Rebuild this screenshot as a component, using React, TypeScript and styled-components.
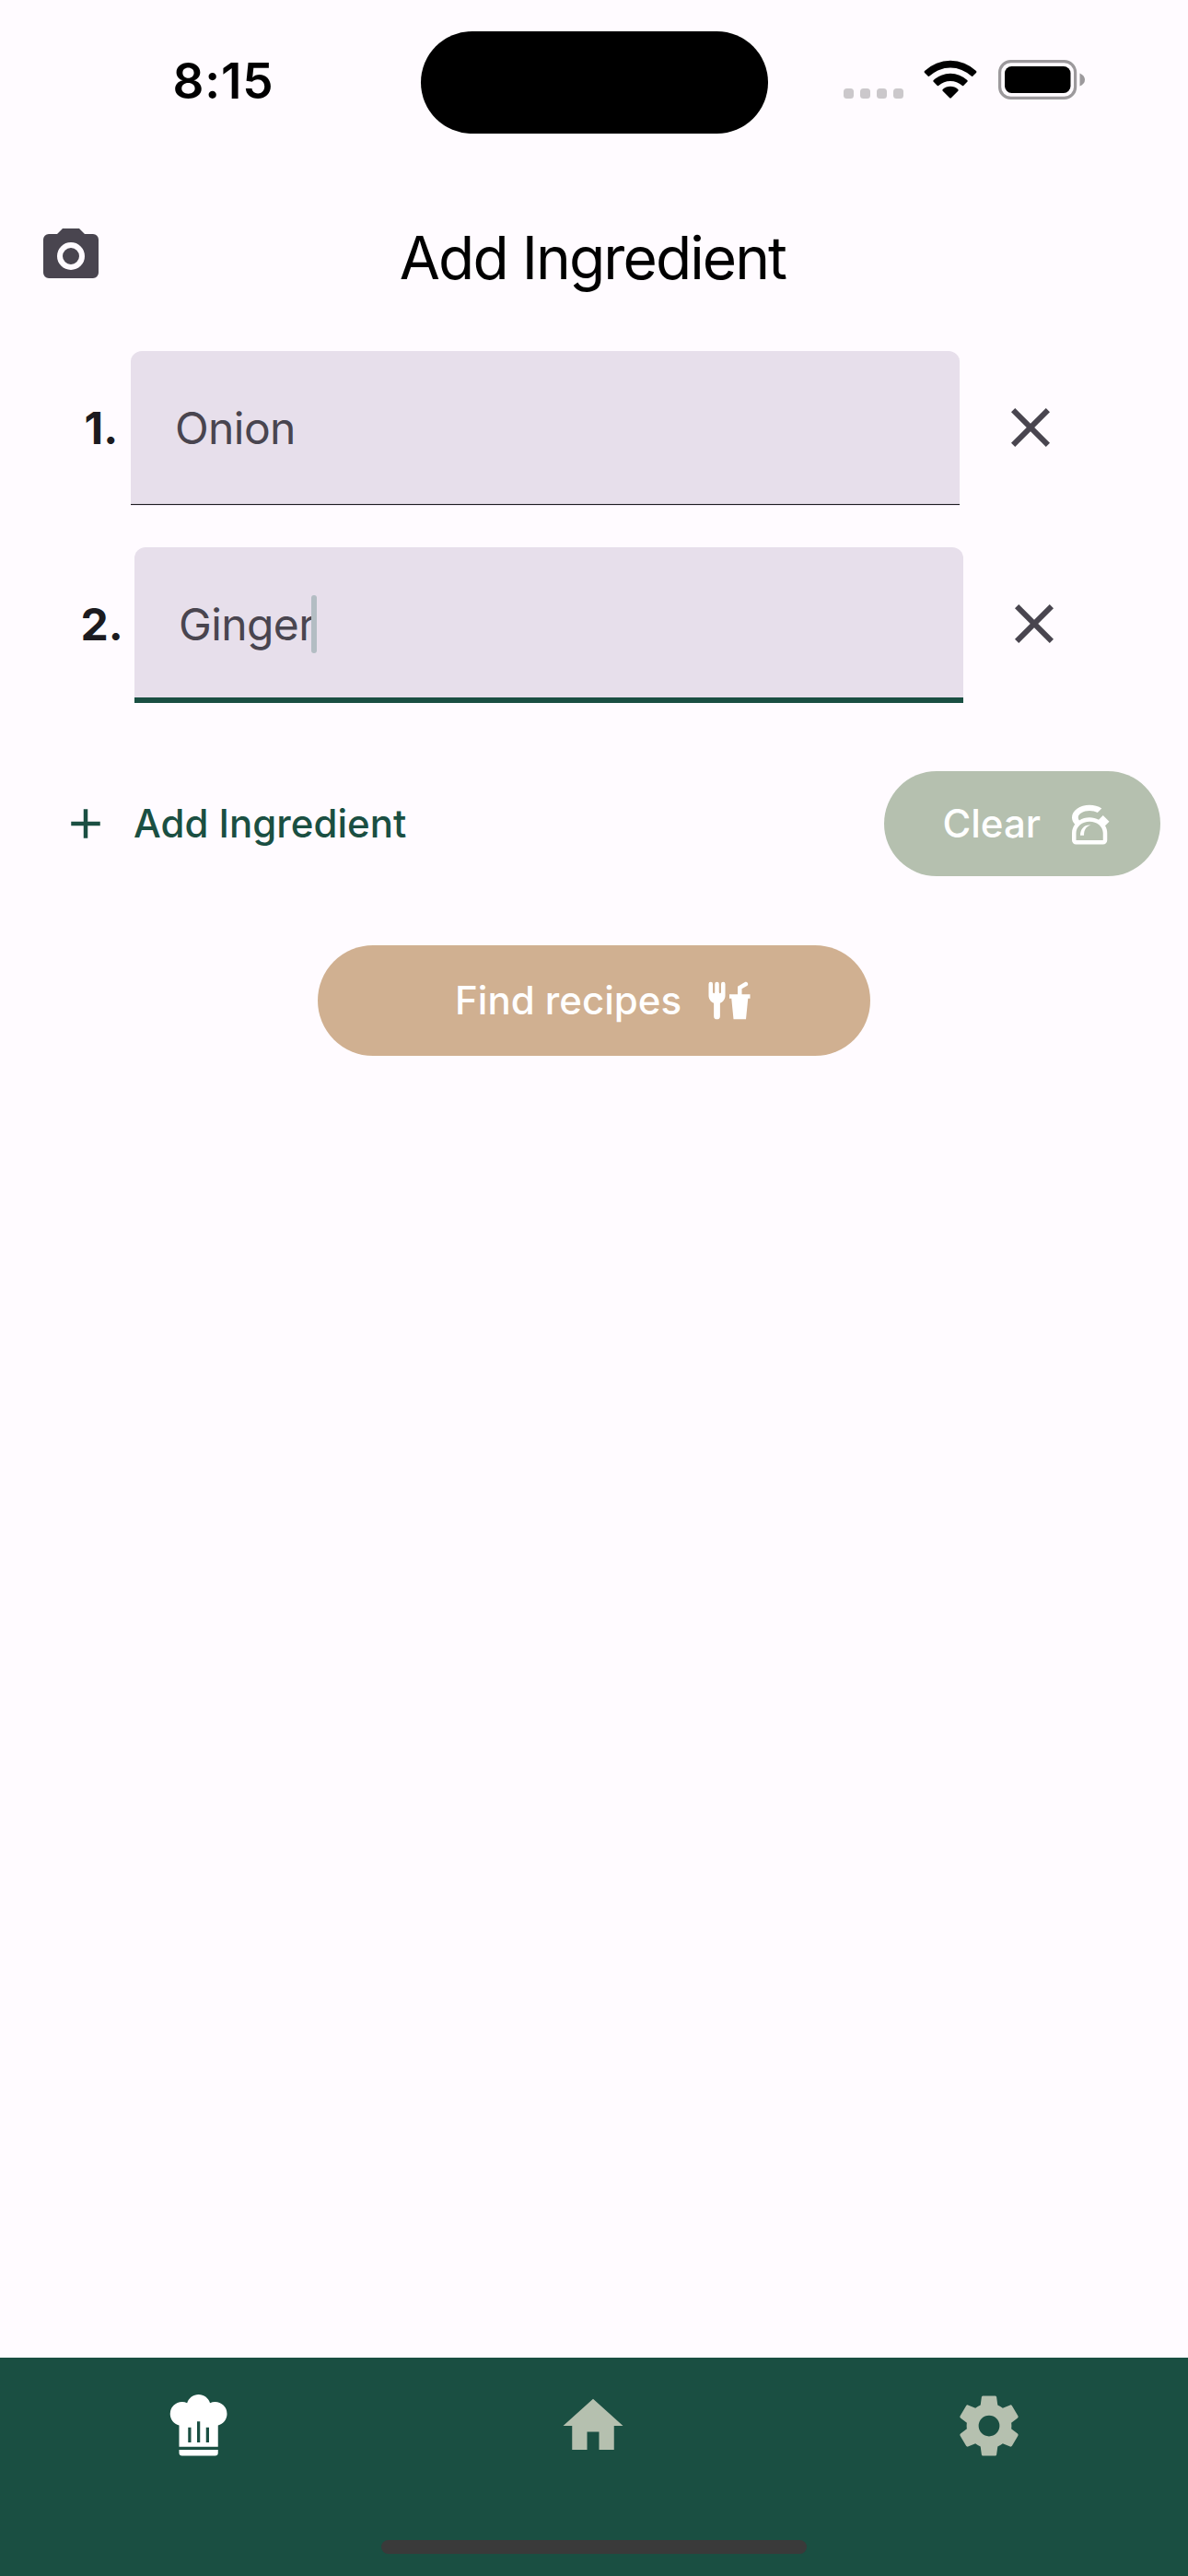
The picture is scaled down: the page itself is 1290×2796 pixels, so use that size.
import React from "react";
import styled, { createGlobalStyle } from "styled-components";

const color = {
  surface: "#fffbff",
  field: "#e7dfeb",
  ink: "#1c1b1f",
  muted: "#49454f",
  green: "#1a4f42",
  sage: "#b5c0af",
  sand: "#d0b091",
};

const GlobalStyle = createGlobalStyle`
  *, *::before, *::after { box-sizing: border-box; }
  body {
    margin: 0;
    background: ${color.surface};
    font-family: Inter, "Liberation Sans", sans-serif;
    -webkit-font-smoothing: antialiased;
  }
  button { font-family: inherit; border: 0; padding: 0; margin: 0; background: none; }
`;

const Screen = styled.div`
  width: 1290px;
  height: 2796px;
  display: flex;
  flex-direction: column;
  background: ${color.surface};
  overflow: hidden;
`;

const StatusBar = styled.div`
  height: 177px;
  display: grid;
  grid-template-columns: 456.5px 377px 456.5px;
  flex: none;
`;

const Clock = styled.div`
  padding: 57px 0 0 187.5px;
  font-size: 53px;
  line-height: 63px;
  font-weight: 600;
  letter-spacing: 0.8px;
  color: #000;
`;

const Island = styled.div`
  height: 111px;
  margin-top: 33.5px;
  border-radius: 56px;
  background: #000;
`;

const StatusIcons = styled.div`
  display: flex;
  padding: 65px 0 0 82.5px;
  align-items: flex-start;
`;

const Dots = styled.div`
  display: flex;
  gap: 7px;
  margin-top: 31px;
`;

const Dot = styled.span`
  width: 11px;
  height: 11px;
  border-radius: 3.5px;
  background: #cbc8cb;
`;

const Wifi = styled.svg`
  width: 58px;
  height: 42px;
  margin-left: 22px;
`;

const Battery = styled.svg`
  width: 95px;
  height: 43px;
  margin-left: 23px;
`;

const Header = styled.header`
  height: 204px;
  flex: none;
  display: grid;
  grid-template-columns: 154px 1fr 154px;
  align-items: start;
`;

const CameraButton = styled.button`
  display: flex;
  justify-content: center;
  padding-top: 65px;
  color: ${color.muted};
`;

const Title = styled.h1`
  margin: 0;
  padding: 64px 3px 0 0;
  text-align: center;
  font-size: 64px;
  line-height: 78px;
  font-weight: 400;
  letter-spacing: -1.9px;
  color: #000;
`;

const Glyph = styled.svg<{ $size: number }>`
  display: block;
  flex: none;
  width: ${(p) => p.$size}px;
  height: ${(p) => p.$size}px;
  fill: currentColor;
`;

const IngredientList = styled.ul`
  list-style: none;
  margin: 0;
  padding: 0;
  display: flex;
  flex-direction: column;
  gap: 45px;
`;

const IngredientRow = styled.li`
  height: 168px;
  display: flex;
  justify-content: center;
  align-items: center;
`;

const Ordinal = styled.span<{ $width: number }>`
  width: ${(p) => p.$width}px;
  padding-left: 1.5px;
  font-size: 48px;
  line-height: 60px;
  font-weight: 700;
  color: ${color.ink};
`;

const Field = styled.div<{ $focused: boolean }>`
  width: 900px;
  height: ${(p) => (p.$focused ? 169 : 168)}px;
  margin-bottom: ${(p) => (p.$focused ? -1 : 0)}px;
  display: flex;
  align-items: center;
  padding: 0 0 ${(p) => (p.$focused ? 2 : 0)}px 48px;
  border-radius: 12px 12px 0 0;
  color: ${color.muted};
  background: ${color.field};
  box-shadow: ${(p) => (p.$focused ? `inset 0 -6px ${color.green}` : `inset 0 -1px ${color.field}, inset 0 -2px ${color.ink}`)};
`;

const FieldText = styled.span`
  font-size: 48px;
  line-height: 60px;
  letter-spacing: -0.6px;
`;

const Caret = styled.span`
  width: 6px;
  height: 63px;
  margin-left: -4px;
  border-radius: 3px;
  background: #b3bdc3;
`;

const RemoveButton = styled.button`
  width: 120px;
  height: 120px;
  margin: 0 21px 2px 17px;
  display: flex;
  align-items: center;
  justify-content: center;
  color: ${color.muted};
`;

const Actions = styled.div`
  display: flex;
  justify-content: space-between;
  align-items: center;
  height: 114px;
  margin-top: 75px;
  padding: 0 30px 0 66px;
`;

const TextButton = styled.button`
  display: flex;
  align-items: center;
  gap: 25px;
  color: ${color.green};
`;

const Label = styled.span`
  font-size: 42px;
  line-height: 60px;
  font-weight: 500;
  white-space: nowrap;
`;

const PillButton = styled.button<{ $width: number; $height: number; $tone: string; $inset: number }>`
  width: ${(p) => p.$width}px;
  height: ${(p) => p.$height}px;
  padding-right: ${(p) => p.$inset}px;
  display: flex;
  align-items: center;
  justify-content: flex-end;
  gap: 25px;
  border-radius: 60px;
  background: ${(p) => p.$tone};
  color: #fff;
`;

const FindRow = styled.div`
  display: flex;
  justify-content: center;
  margin-top: 75px;
`;

const TabBar = styled.nav`
  height: 237px;
  flex: none;
  margin-top: auto;
  background: ${color.green};
  display: flex;
  flex-direction: column;
  justify-content: space-between;
  align-items: center;
  padding: 35px 0 24px;
`;

const Tabs = styled.div`
  width: 1290px;
  margin: 0 1px 0 -1px;
  display: grid;
  grid-template-columns: repeat(3, 1fr);
`;

const Tab = styled.button<{ $active?: boolean }>`
  display: flex;
  justify-content: center;
  color: ${(p) => (p.$active ? "#fff" : color.sage)};
`;

const HomeIndicator = styled.div`
  width: 462px;
  height: 15px;
  border-radius: 8px;
  background: #3a3a3a;
`;

const paths = {
  camera:
    "M4,4H7L9,2H15L17,4H20A2,2 0 0,1 22,6V18A2,2 0 0,1 20,20H4A2,2 0 0,1 2,18V6A2,2 0 0,1 4,4M12,7A5,5 0 0,0 7,12A5,5 0 0,0 12,17A5,5 0 0,0 17,12A5,5 0 0,0 12,7M12,9A3,3 0 0,1 15,12A3,3 0 0,1 12,15A3,3 0 0,1 9,12A3,3 0 0,1 12,9Z",
  close:
    "M19,6.41L17.59,5L12,10.59L6.41,5L5,6.41L10.59,12L5,17.59L6.41,19L12,13.41L17.59,19L19,17.59L13.41,12L19,6.41Z",
  plus: "M19,13H13V19H11V13H5V11H11V5H13V11H19V13Z",
  kettle:
    "M12.5,3C7.81,3 4,5.69 4,9C4,10.19 4.5,11.34 5.44,12.33C4.53,13.5 4,14.96 4,16.5V20C4,21.11 4.89,22 6,22H19C20.11,22 21,21.11 21,20V16.5C21,15.28 20.66,14.07 20,13L22,11L19,8L16.9,10.1C15.58,9.38 14.05,9 12.5,9C10.65,9 8.95,9.53 7.55,10.41C7.19,9.97 7,9.5 7,9C7,7.21 9.46,5.75 12.5,5.75C13.93,5.75 15.3,6.08 16.33,6.67L18.35,4.65C16.77,3.59 14.68,3 12.5,3M12.5,11C16.09,11 19,13.46 19,16.5V20H6V16.5C6,13.46 8.91,11 12.5,11M13.1,12.7C10.2,12.2 8,14.4 8,17.7H9.8C9.8,15.2 10.6,13.5 13.1,12.7Z",
  forkDrink:
    "M3,3A1,1 0 0,0 2,4V8L2,9.5C2,11.19 3.03,12.63 4.5,13.22V19.5A1.5,1.5 0 0,0 6,21A1.5,1.5 0 0,0 7.5,19.5V13.22C8.97,12.63 10,11.19 10,9.5V8L10,4A1,1 0 0,0 9,3A1,1 0 0,0 8,4V8A0.5,0.5 0 0,1 7.5,8.5A0.5,0.5 0 0,1 7,8V4A1,1 0 0,0 6,3A1,1 0 0,0 5,4V8A0.5,0.5 0 0,1 4.5,8.5A0.5,0.5 0 0,1 4,8V4A1,1 0 0,0 3,3M19.88,3C19.75,3 19.62,3.09 19.5,3.16L16,5.25V9H12V11H13L14,21H20L21,11H22V9H18V6.34L20.5,4.84C21,4.56 21.13,4 20.84,3.5C20.63,3.14 20.26,2.95 19.88,3Z",
  chefHat:
    "M12.5,1.5C10.73,1.5 9.17,2.67 8.67,4.37C8.14,4.13 7.58,4 7,4A4,4 0 0,0 3,8C3,9.82 4.24,11.41 6,11.87V19H19V11.87C20.76,11.41 22,9.82 22,8A4,4 0 0,0 18,4C17.42,4 16.86,4.13 16.33,4.37C15.83,2.67 14.27,1.5 12.5,1.5M12,10.5H13V17.5H12V10.5M9,12.5H10V17.5H9V12.5M15,12.5H16V17.5H15V12.5M6,20V21A1,1 0 0,0 7,22H18A1,1 0 0,0 19,21V20H6Z",
  home: "M10,20V14H14V20H19V12H22L12,3L2,12H5V20H10Z",
  cog: "M12,15.5A3.5,3.5 0 0,1 8.5,12A3.5,3.5 0 0,1 12,8.5A3.5,3.5 0 0,1 15.5,12A3.5,3.5 0 0,1 12,15.5M19.43,12.97C19.47,12.65 19.5,12.33 19.5,12C19.5,11.67 19.47,11.34 19.43,11L21.54,9.37C21.73,9.22 21.78,8.95 21.66,8.73L19.66,5.27C19.54,5.05 19.27,4.96 19.05,5.05L16.56,6.05C16.04,5.66 15.5,5.32 14.87,5.07L14.5,2.42C14.46,2.18 14.25,2 14,2H10C9.75,2 9.54,2.18 9.5,2.42L9.13,5.07C8.5,5.32 7.96,5.66 7.44,6.05L4.95,5.05C4.73,4.96 4.46,5.05 4.34,5.27L2.34,8.73C2.21,8.95 2.27,9.22 2.46,9.37L4.57,11C4.53,11.34 4.5,11.67 4.5,12C4.5,12.33 4.53,12.65 4.57,12.97L2.46,14.63C2.27,14.78 2.21,15.05 2.34,15.27L4.34,18.73C4.46,18.95 4.73,19.03 4.95,18.95L7.44,17.94C7.96,18.34 8.5,18.68 9.13,18.93L9.5,21.58C9.54,21.82 9.75,22 10,22H14C14.25,22 14.46,21.82 14.5,21.58L14.87,18.93C15.5,18.67 16.04,18.34 16.56,17.94L19.05,18.95C19.27,19.03 19.54,18.95 19.66,18.73L21.66,15.27C21.78,15.05 21.73,14.78 21.54,14.63L19.43,12.97Z",
};

function Icon({ name, size }: { name: keyof typeof paths; size: number }) {
  return (
    <Glyph $size={size} viewBox="0 0 24 24" aria-hidden="true">
      <path d={paths[name]} fillRule={name === "kettle" ? "evenodd" : "nonzero"} />
    </Glyph>
  );
}

const ingredients = [
  { name: "Onion", ordinalWidth: 52, focused: false },
  { name: "Ginger", ordinalWidth: 60, focused: true },
];

export default function App() {
  return (
    <Screen>
      <GlobalStyle />
      <StatusBar>
        <Clock>8:15</Clock>
        <Island />
        <StatusIcons>
          <Dots>
            <Dot />
            <Dot />
            <Dot />
            <Dot />
          </Dots>
          <Wifi viewBox="0 0 58 42" aria-hidden="true">
            <path d="M1 12.1A40.5 40.5 0 0 1 57 12.1Q57.8 13 57 13.9L53.2 17.7Q52.5 18.3 51.7 17.6A33 33 0 0 0 6.3 17.6Q5.5 18.3 4.8 17.7L1 13.9Q.2 13 1 12.1Z" />
            <path d="M10.7 22.1A26.5 26.5 0 0 1 47.3 22.1Q48.1 23 47.3 23.8L43.2 27.9Q42.4 28.5 41.6 27.8A19 19 0 0 0 16.4 27.8Q15.6 28.5 14.8 27.9L10.7 23.8Q9.9 23 10.7 22.1Z" />
            <path d="M20.7 32A12.5 12.5 0 0 1 37.3 32Q38.2 32.9 37.3 33.8L29.8 41.3Q29 42 28.2 41.3L20.7 33.8Q19.8 32.9 20.7 32Z" />
          </Wifi>
          <Battery viewBox="0 0 95 43" aria-hidden="true">
            <rect x="1.6" y="1.6" width="82" height="39.8" rx="12" fill="none" stroke="#9c999c" strokeWidth="3.2" />
            <rect x="7" y="7" width="71.5" height="29" rx="7.5" />
            <path d="M88.5 14.5Q94 17 94 21.5T88.5 28.5Z" fill="#9c999c" />
          </Battery>
        </StatusIcons>
      </StatusBar>

      <Header>
        <CameraButton aria-label="Scan">
          <Icon name="camera" size={72} />
        </CameraButton>
        <Title>Add Ingredient</Title>
      </Header>

      <IngredientList>
        {ingredients.map((item, i) => (
          <IngredientRow key={item.name}>
            <Ordinal $width={item.ordinalWidth}>{i + 1}.</Ordinal>
            <Field $focused={item.focused}>
              <FieldText>{item.name}</FieldText>
              {item.focused && <Caret />}
            </Field>
            <RemoveButton aria-label="Remove">
              <Icon name="close" size={72} />
            </RemoveButton>
          </IngredientRow>
        ))}
      </IngredientList>

      <Actions>
        <TextButton>
          <Icon name="plus" size={54} />
          <Label>Add Ingredient</Label>
        </TextButton>
        <PillButton $width={300} $height={114} $tone={color.sage} $inset={51}>
          <Label>Clear</Label>
          <Icon name="kettle" size={54} />
        </PillButton>
      </Actions>

      <FindRow>
        <PillButton $width={600} $height={120} $tone={color.sand} $inset={126}>
          <Label>Find recipes</Label>
          <Icon name="forkDrink" size={54} />
        </PillButton>
      </FindRow>

      <TabBar>
        <Tabs>
          <Tab $active aria-label="Recipes">
            <Icon name="chefHat" size={78} />
          </Tab>
          <Tab aria-label="Home">
            <Icon name="home" size={78} />
          </Tab>
          <Tab aria-label="Settings">
            <Icon name="cog" size={78} />
          </Tab>
        </Tabs>
        <HomeIndicator />
      </TabBar>
    </Screen>
  );
}
